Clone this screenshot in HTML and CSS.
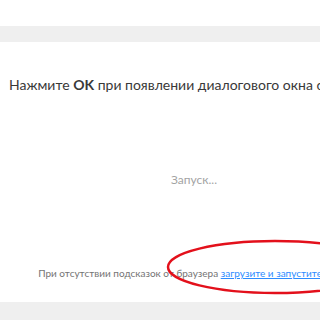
FILE: index.html
```html
<!doctype html>
<html lang="ru">
    <head>
        <meta charset="UTF-8" />
        <meta name="viewport" content="width=device-width, initial-scale=1.0" />
        <title>Запуск Zoom</title>
        <link rel="stylesheet" href="styles.css">
    </head>
    <body>
        <div class="page">
            <div class="header-space"></div>
            <div class="band"></div>
            <main class="launch">
                <h1 class="launch-title">
                    Нажмите <b>OK</b> при появлении диалогового окна системы
                </h1>
                <p class="launch-status">Запуск...</p>
                <p class="launch-hint">
                    При отсутствии подсказок от браузера
                    <a href="#">загрузите и запустите Zoom</a>
                </p>

                <!-- hand-drawn highlight -->
                <svg class="mark" viewBox="0 0 240 60" xmlns="http://www.w3.org/2000/svg">
                    <ellipse cx="115" cy="30" rx="107" ry="26" />
                </svg>
            </main>
            <div class="band bottom"></div>
        </div>
    </body>
</html>
```

FILE: styles.css
```css
*,
*::before,
*::after {
    margin: 0;
    padding: 0;
    box-sizing: border-box;
}

:root {
    --text-color: #393939;
    --muted-color: #a3a3a3;
    --hint-color: #747474;
    --link-color: #2d8cff;
    --band-color: #efefef;
    --mark-color: #e3101b;
}

html,
body {
    width: 320px;
    height: 320px;
    overflow: hidden;
}

body {
    font-family: Lato, "Open Sans", sans-serif;
    background: white;
    color: var(--text-color);
}

.header-space {
    height: 26px;
}

.band {
    height: 16px;
    background: var(--band-color);
}

.band.bottom {
    height: 18px;
}

.launch {
    position: relative;
    width: 388px;
    height: 260px;
    padding-top: 32px;
    text-align: center;
}

.launch-title {
    font-size: 14px;
    font-weight: 400;
    line-height: 22px;
    white-space: nowrap;
    text-align: left;
    padding-left: 9px;
}

.launch-title b {
    font-weight: 700;
}

.launch-status {
    margin-top: 76px;
    font-size: 12px;
    line-height: 16px;
    color: var(--muted-color);
}

.launch-hint {
    margin-top: 78px;
    font-size: 10px;
    line-height: 14px;
    white-space: nowrap;
    color: var(--hint-color);
}

.launch-hint a {
    color: var(--link-color);
    text-decoration: underline;
}

.mark {
    position: absolute;
    left: 160px;
    top: 195px;
    width: 240px;
    height: 60px;
    overflow: visible;
}

.mark ellipse {
    fill: none;
    stroke: var(--mark-color);
    stroke-width: 2.5;
}
```
